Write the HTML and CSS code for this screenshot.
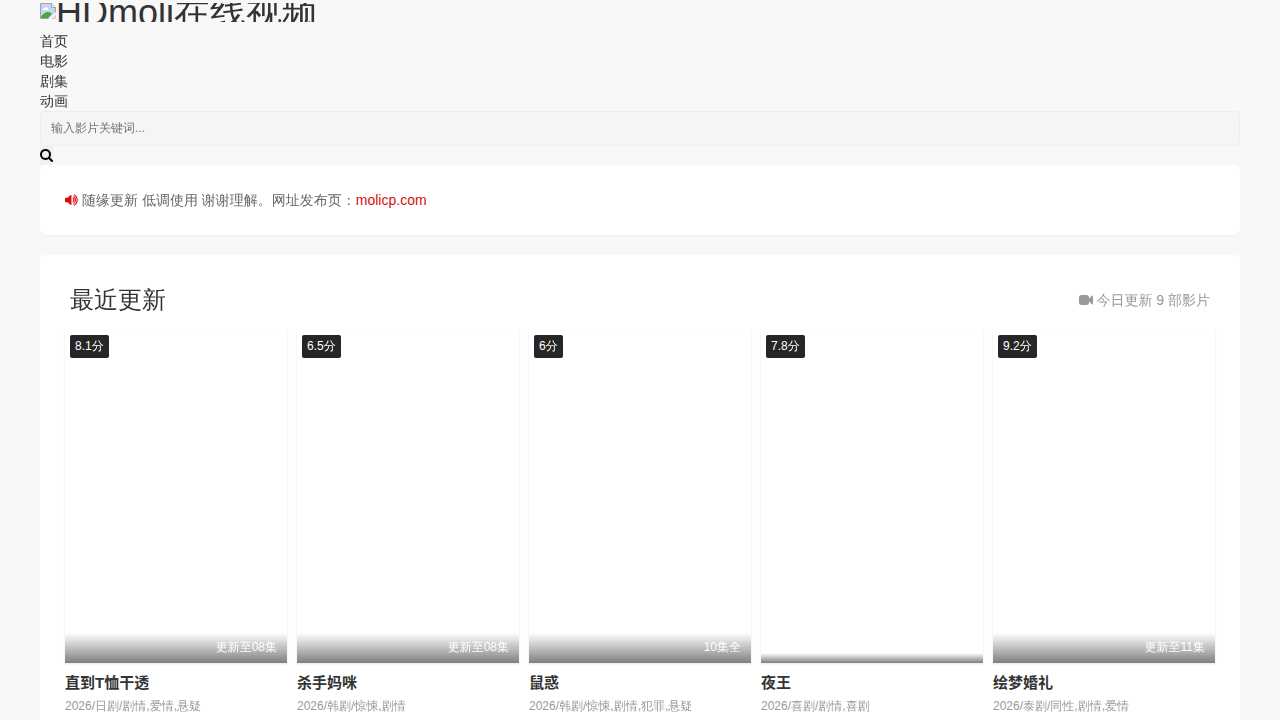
FILE: index.html
```html
<!DOCTYPE html>
<html lang="zh-CN">
<head>
<meta charset="utf-8">
<meta name="viewport" content="width=device-width, initial-scale=1">
<title>HDmoli在线视频</title>
<link rel="stylesheet" href="styles.css">
</head>
<body>
<div class="container">
  <header class="header">
    <a class="logo" href="#">
      <svg class="logo-icon" viewBox="0 0 16 16" aria-hidden="true">
        <path d="M.5.5h11l4 4v11H.5z" fill="#c3d7f5"/>
        <path d="M3 7a1.500 1.500 0 0 1 1.500-2 2 2 0 0 1 3.500.5 1.200 1.200 0 0 1 .5 1.500H3z" fill="#fff"/>
        <path d="M1 15v-1.500c2-2.500 4.500-4.500 7-4.500 2 0 3 1 4 2l-4 4z" fill="#4ca63c"/>
        <path d="M.5 15.500V.5h11l4 4v11z" fill="none" stroke="#a3a3a3"/>
        <path d="M11.500.5v4h4" fill="#f4f4f4" stroke="#a3a3a3"/>
        <path d="M16 9 8 16h8z" fill="#f8f8f8"/>
        <path d="M15.500 12.500v3h-3.500z" fill="#fff" stroke="#a3a3a3" stroke-width=".5"/>
      </svg>
      <span>HDmoli在线视频</span>
    </a>
    <nav>
      <ul class="nav">
        <li><a href="#">首页</a></li>
        <li><a href="#">电影</a></li>
        <li><a href="#">剧集</a></li>
        <li><a href="#">动画</a></li>
      </ul>
    </nav>
    <form class="search">
      <input class="search-input" type="text" aria-label="搜索影片" placeholder="输入影片关键词...">
      <button class="search-button" type="button" aria-label="搜索">
        <svg class="icon" viewBox="0 0 1664 1664" aria-hidden="true"><path d="M1152 704a448 448 0 1 0-896 0 448 448 0 0 0 896 0m512 832a128 128 0 0 1-218 90l-343-342A704 704 0 1 1 1284 1103l343 343q37 37 37 90"/></svg>
      </button>
    </form>
  </header>
  <main>
    <section class="panel notice">
      <svg class="icon notice-icon" viewBox="0 0 1664 1408" aria-hidden="true"><path d="M768 160v1088a64 64 0 0 1-109 45L326 960H64a64 64 0 0 1-64-64V512a64 64 0 0 1 64-64h262l333-333a64 64 0 0 1 109 45"/><path d="M955 527a210 210 0 0 1 0 354M1030 310a470 470 0 0 1 0 788M1110 95a720 720 0 0 1 0 1218" fill="none" stroke="currentColor" stroke-width="128" stroke-linecap="round"/></svg>
      <p>随缘更新 低调使用 谢谢理解。网址发布页：<a href="#">molicp.com</a></p>
    </section>
    <section class="panel">
      <div class="panel-head">
        <h2>最近更新</h2>
        <p class="count">
          <svg class="icon" viewBox="0 0 14 14" aria-hidden="true"><path d="M2.500 2h5A2.500 2.500 0 0 1 10 4.500v1.200L13.200 2.600q.8-.5.8.4v8q0 .9-.8.4L10 8.300v1.200A2.500 2.500 0 0 1 7.500 12h-5A2.500 2.500 0 0 1 0 9.500v-5A2.500 2.500 0 0 1 2.500 2"/></svg>
          <span>今日更新 9 部影片</span>
        </p>
      </div>
      <ul class="movies">
        <li>
          <a class="poster" href="#"><span class="score">8.1分</span><span class="status">更新至08集</span></a>
          <h4><a href="#">直到T恤干透</a></h4>
          <p class="meta">2026/日剧/剧情,爱情,悬疑</p>
        </li>
        <li>
          <a class="poster" href="#"><span class="score">6.5分</span><span class="status">更新至08集</span></a>
          <h4><a href="#">杀手妈咪</a></h4>
          <p class="meta">2026/韩剧/惊悚,剧情</p>
        </li>
        <li>
          <a class="poster" href="#"><span class="score">6分</span><span class="status">10集全</span></a>
          <h4><a href="#">鼠惑</a></h4>
          <p class="meta">2026/韩剧/惊悚,剧情,犯罪,悬疑</p>
        </li>
        <li>
          <a class="poster" href="#"><span class="score">7.8分</span><span class="status"></span></a>
          <h4><a href="#">夜王</a></h4>
          <p class="meta">2026/喜剧/剧情,喜剧</p>
        </li>
        <li>
          <a class="poster" href="#"><span class="score">9.2分</span><span class="status">更新至11集</span></a>
          <h4><a href="#">绘梦婚礼</a></h4>
          <p class="meta">2026/泰剧/同性,剧情,爱情</p>
        </li>
      </ul>
    </section>
  </main>
</div>
</body>
</html>
```
FILE: styles.css
```css
* {
  box-sizing: border-box;
}

body {
  margin: 0;
  background: #f8f8f8;
  color: #333;
  font: 14px/20px "Liberation Sans", "WenQuanYi Zen Hei", "Droid Sans Fallback", "Noto Sans CJK SC", sans-serif;
}

h2, h4, p, ul {
  margin: 0;
  padding: 0;
}

ul {
  list-style: none;
}

a {
  color: inherit;
  text-decoration: none;
}

.container {
  max-width: 1200px;
  margin: 0 auto;
}

.icon {
  flex: none;
  width: 14px;
  height: 14px;
  fill: currentColor;
}

.header {
  padding-top: 3px;
}

.logo {
  display: flex;
  align-items: flex-start;
  height: 19px;
  margin-bottom: 9px;
  overflow: hidden;
  font-size: 36px;
}

.logo-icon {
  flex: none;
  width: 16px;
  height: 16px;
}

.search {
  display: flex;
  flex-direction: column;
  align-items: flex-start;
}

.search-input {
  width: 100%;
  height: 35px;
  padding: 0 10px 2px;
  border: 1px solid #eee;
  border-radius: 4px;
  background: #f5f5f5;
  color: #333;
  font: inherit;
  font-size: 12px;
}

.search-input::placeholder {
  color: #757575;
}

.search-button {
  display: flex;
  align-items: center;
  height: 19px;
  padding: 0;
  border: 0;
  background: #f0f0f0;
  color: #000;
}

.search-button .icon {
  width: 13px;
  height: 13px;
}

.panel {
  margin-bottom: 20px;
  padding: 25px;
  border-radius: 5px;
  background: #fff;
  box-shadow: 0 1px 2px rgba(0, 0, 0, 0.05);
}

.notice {
  display: flex;
  align-items: center;
  gap: 3px;
  color: #666;
}

.notice a,
.notice-icon {
  color: #d90e0e;
}

.panel-head {
  display: flex;
  align-items: center;
  justify-content: space-between;
  padding: 0 5px;
  margin-bottom: 10px;
}

.panel-head h2 {
  font-size: 24px;
  font-weight: 400;
  line-height: 40px;
}

.count {
  display: flex;
  align-items: center;
  gap: 3px;
  color: #999;
}

.movies {
  display: grid;
  grid-template-columns: repeat(5, minmax(0, 1fr));
  gap: 20px 10px;
}

.poster {
  display: block;
  position: relative;
  aspect-ratio: 2 / 3;
  box-shadow: 0 1px 2px rgba(0, 0, 0, 0.1);
}

.score {
  position: absolute;
  top: 5px;
  left: 5px;
  padding: 0 5px;
  border-radius: 2px;
  background: #262626;
  color: #fff;
  font-size: 12px;
  line-height: 23px;
}

.status {
  position: absolute;
  right: 0;
  bottom: 0;
  left: 0;
  padding: 4px 10px 6px;
  background: linear-gradient(transparent, rgba(0, 0, 0, 0.5));
  color: #fff;
  font-size: 12px;
  text-align: right;
}

.movies h4 {
  margin-top: 10px;
  overflow: hidden;
  font-family: "Liberation Sans", "Noto Sans CJK SC", sans-serif;
  font-size: 15px;
  line-height: 20px;
  text-overflow: ellipsis;
  white-space: nowrap;
}

.meta {
  margin-top: 3px;
  overflow: hidden;
  color: #999;
  font-size: 12px;
  text-overflow: ellipsis;
  white-space: nowrap;
}
```
